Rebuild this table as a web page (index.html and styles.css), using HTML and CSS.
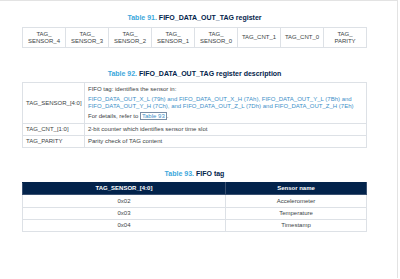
FILE: index.html
```html
<!DOCTYPE html>
<html>
<head>
<meta charset="utf-8">
<link rel="stylesheet" href="styles.css">
</head>
<body>
<div class="page">
  <div class="caption cap1"><span class="num">Table 91.</span> FIFO_DATA_OUT_TAG register</div>
  <table class="reg">
    <tr>
      <td>TAG_<br>SENSOR_4</td>
      <td>TAG_<br>SENSOR_3</td>
      <td>TAG_<br>SENSOR_2</td>
      <td>TAG_<br>SENSOR_1</td>
      <td>TAG_<br>SENSOR_0</td>
      <td>TAG_CNT_1</td>
      <td>TAG_CNT_0</td>
      <td>TAG_<br>PARITY</td>
    </tr>
  </table>

  <div class="caption cap2"><span class="num">Table 92.</span> FIFO_DATA_OUT_TAG register description</div>
  <table class="desc">
    <tr class="r1">
      <td class="name">TAG_SENSOR_[4:0]</td>
      <td class="text">
        <div class="p">FIFO tag: identifies the sensor in:</div>
        <div class="p blue">FIFO_DATA_OUT_X_L (79h) and FIFO_DATA_OUT_X_H (7Ah), FIFO_DATA_OUT_Y_L (7Bh) and<br>FIFO_DATA_OUT_Y_H (7Ch), and FIFO_DATA_OUT_Z_L (7Dh) and FIFO_DATA_OUT_Z_H (7Eh)</div>
        <div class="p">For details, refer to <span class="link">Table 93</span>.</div>
      </td>
    </tr>
    <tr class="r2">
      <td class="name">TAG_CNT_[1:0]</td>
      <td class="text">2-bit counter which identifies sensor time slot</td>
    </tr>
    <tr class="r2">
      <td class="name">TAG_PARITY</td>
      <td class="text">Parity check of TAG content</td>
    </tr>
  </table>

  <div class="caption cap3"><span class="num">Table 93.</span> FIFO tag</div>
  <table class="fifo">
    <tr class="head">
      <th class="c1">TAG_SENSOR_[4:0]</th>
      <th>Sensor name</th>
    </tr>
    <tr><td>0x02</td><td>Accelerometer</td></tr>
    <tr><td>0x03</td><td>Temperature</td></tr>
    <tr><td>0x04</td><td>Timestamp</td></tr>
  </table>
</div>
</body>
</html>
```
FILE: styles.css
```css
html, body {
  margin: 0;
  padding: 0;
  background: #ffffff;
}
body {
  font-family: "Liberation Sans", Arial, sans-serif;
  color: #3b3f45;
}
.page {
  width: 398px;
  height: 278px;
  border-top: 1px solid #e3e3e3;
  border-right: 1px solid #e3e3e3;
  padding-left: 22px;
  box-sizing: border-box;
  overflow: hidden;
}
.caption {
  width: 345px;
  text-align: center;
  font-weight: bold;
  font-size: 7px;
  line-height: 10px;
  color: #03234b;
}
.caption .num {
  color: #3ca8dc;
}
.cap1 { padding-top: 12px; margin-bottom: 4px; }
.cap2 { margin-top: 21px; margin-bottom: 3px; }
.cap3 { margin-top: 21px; margin-bottom: 3px; }

table {
  border-collapse: collapse;
  width: 345px;
  table-layout: fixed;
  font-size: 6px;
}
td, th {
  border: 1px solid #dde1e6;
  padding: 0;
}
.reg td {
  height: 19px;
  text-align: center;
  line-height: 7px;
  vertical-align: middle;
}
.desc td {
  vertical-align: middle;
  padding-left: 3px;
}
.desc .name { width: 58px; }
.desc .r1 td { height: 40px; }
.desc .r2 td { height: 11px; line-height: 7px; }
.desc .text .p { line-height: 7px; }
.desc .text .p + .p { margin-top: 3px; }
.desc .text .p.blue { line-height: 7px; }
.blue { color: #3c8fc8; }
.link {
  color: #3c8fc8;
  border: 1px solid #7a8ea6;
  padding: 0 1px;
}
.fifo th, .fifo td {
  text-align: center;
  height: 11px;
  line-height: 7px;
}
.fifo .c1 { width: 202px; }
.fifo th {
  background: #03234b;
  color: #ffffff;
  font-weight: bold;
  border-color: #3a5070;
  border-top-color: #03234b;
}
.fifo tr:nth-child(2) td { height: 12px; }
```
